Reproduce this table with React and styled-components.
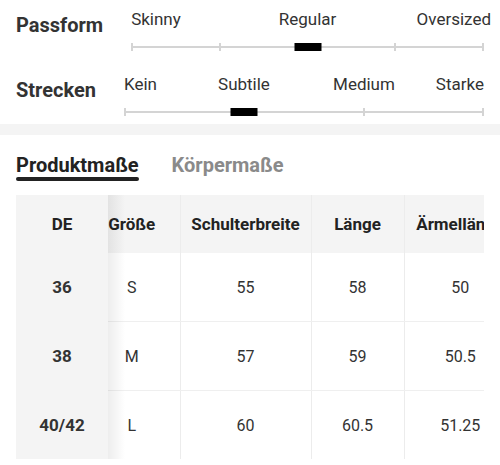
import React from 'react';
import styled, { createGlobalStyle } from 'styled-components';

const GlobalStyle = createGlobalStyle`
  body {
    margin: 0;
    background: #fff;
    font-family: Roboto, "Liberation Sans", Arial, sans-serif;
    color: #333;
  }
`;

const scales = [
  { label: 'Passform', options: ['Skinny', 'Regular', 'Oversized'], ticks: 5, value: 2, lastShift: -7 },
  { label: 'Strecken', options: ['Kein', 'Subtile', 'Medium', 'Starke'], ticks: 4, value: 1, lastShift: 0 },
];

const columns = ['DE', 'Größe', 'Schulterbreite', 'Länge', 'Ärmellänge'];
const rows = [
  ['36', 'S', '55', '58', '50'],
  ['38', 'M', '57', '59', '50.5'],
  ['40/42', 'L', '60', '60.5', '51.25'],
];

function Scale({ scale }) {
  const n = scale.options.length;
  const cols = 2 * (n - 1);
  return (
    <ScaleRow>
      <ScaleLabel>{scale.label}</ScaleLabel>
      <ScaleBody>
        <OptionGrid cols={cols}>
          {scale.options.map((opt, i) => {
            const first = i === 0;
            const last = i === n - 1;
            return (
              <Option
                key={opt}
                span={first || last ? 1 : 2}
                align={first ? 'start' : last ? 'end' : 'center'}
                shift={last ? scale.lastShift : 0}
              >
                {opt}
              </Option>
            );
          })}
        </OptionGrid>
        <Track>
          {Array.from({ length: scale.ticks }).map((_, i) => (
            <Tick key={i} />
          ))}
          <Marker style={{ left: `${(scale.value / (scale.ticks - 1)) * 100}%` }} />
        </Track>
      </ScaleBody>
    </ScaleRow>
  );
}

export default function App() {
  return (
    <Page>
      <GlobalStyle />
      <FitSection>
        {scales.map((s) => (
          <Scale key={s.label} scale={s} />
        ))}
      </FitSection>
      <Divider />
      <SizeSection>
        <Tabs>
          <Tab active>Produktmaße</Tab>
          <Tab>Körpermaße</Tab>
        </Tabs>
        <TableWrap>
          <Table>
            <colgroup>
              <col style={{ width: 92 }} />
              <col style={{ width: 72 }} />
              <col style={{ width: 131 }} />
              <col style={{ width: 93 }} />
              <col style={{ width: 112 }} />
            </colgroup>
            <thead>
              <tr>
                {columns.map((c, i) => (
                  <HeadCell key={c} sticky={i === 0} narrow={i === 1}>
                    {c}
                  </HeadCell>
                ))}
              </tr>
            </thead>
            <tbody>
              {rows.map((r, ri) => (
                <tr key={ri}>
                  {r.map((v, i) => (
                    <BodyCell key={i} sticky={i === 0} narrow={i === 1} lastRow={ri === rows.length - 1}>
                      {v}
                    </BodyCell>
                  ))}
                </tr>
              ))}
            </tbody>
          </Table>
        </TableWrap>
      </SizeSection>
    </Page>
  );
}

const Page = styled.div`
  width: 500px;
  height: 465px;
  overflow: hidden;
  background: #fff;
`;

const FitSection = styled.div`
  padding: 9px 16px 8px 16px;
  display: flex;
  flex-direction: column;
  gap: 23px;
`;

const ScaleRow = styled.div`
  display: flex;
  align-items: flex-start;
  gap: 28px;
`;

const ScaleLabel = styled.div`
  margin-top: 4px;
  font-size: 20px;
  line-height: 24px;
  font-weight: 700;
  color: #333;
`;

const ScaleBody = styled.div`
  flex: 1;
  display: flex;
  flex-direction: column;
  gap: 14px;
`;

const OptionGrid = styled.div`
  display: grid;
  grid-template-columns: repeat(${(p) => p.cols}, 1fr);
  font-size: 17px;
  line-height: 20px;
  color: #333;
`;

const Option = styled.span`
  grid-column: span ${(p) => p.span};
  justify-self: ${(p) => p.align};
  white-space: nowrap;
  margin-right: ${(p) => p.shift}px;
`;

const Track = styled.div`
  position: relative;
  height: 8px;
  display: flex;
  justify-content: space-between;
  align-items: stretch;
  &::before {
    content: '';
    position: absolute;
    left: 0;
    right: 0;
    top: 3px;
    height: 2px;
    background: #d4d4d4;
  }
`;

const Tick = styled.span`
  width: 2px;
  background: #d4d4d4;
`;

const Marker = styled.span`
  position: absolute;
  top: 0;
  width: 27px;
  height: 8px;
  transform: translateX(-50%);
  background: #000;
`;

const Divider = styled.div`
  height: 11px;
  background: #f4f4f4;
`;

const SizeSection = styled.div`
  padding: 18px 16px 0 16px;
`;

const Tabs = styled.div`
  display: flex;
  gap: 33px;
`;

const Tab = styled.div`
  position: relative;
  font-size: 20px;
  line-height: 24px;
  font-weight: 700;
  color: ${(p) => (p.active ? '#222' : '#8a8a8a')};
  padding-bottom: 4px;
  &::after {
    content: '';
    display: ${(p) => (p.active ? 'block' : 'none')};
    position: absolute;
    left: 0;
    right: 0;
    bottom: 0;
    height: 4px;
    border-radius: 2px;
    background: #222;
  }
`;

const TableWrap = styled.div`
  margin-top: 14px;
  width: 468px;
  overflow: hidden;
`;

const Table = styled.table`
  width: 500px;
  table-layout: fixed;
  border-collapse: collapse;
  font-size: 16px;
`;

const Cell = styled.td`
  position: relative;
  text-align: center;
  padding: 0;
  padding-right: ${(p) => (p.narrow ? '24px' : '0')};
  white-space: nowrap;
  overflow: visible;
  border-left: ${(p) => (p.sticky || p.narrow ? 'none' : '1px solid #ececec')};
  ${(p) =>
    p.sticky &&
    `
    background: #f4f4f4;
    &::after {
      content: '';
      position: absolute;
      top: 0;
      bottom: 0;
      right: -17px;
      width: 17px;
      background: linear-gradient(to right, rgba(0,0,0,0.07), rgba(0,0,0,0));
      z-index: 1;
    }
  `}
`;

const HeadCell = styled(Cell).attrs({ as: 'th' })`
  height: 58px;
  background: #f4f4f4;
  font-size: 17px;
  font-weight: 700;
  color: #222;
`;

const BodyCell = styled(Cell)`
  height: 68px;
  color: #333;
  font-size: ${(p) => (p.sticky ? '17px' : '16px')};
  font-weight: ${(p) => (p.sticky ? 700 : 400)};
  border-bottom: ${(p) => (p.lastRow || p.sticky ? 'none' : '1px solid #efefef')};
`;
